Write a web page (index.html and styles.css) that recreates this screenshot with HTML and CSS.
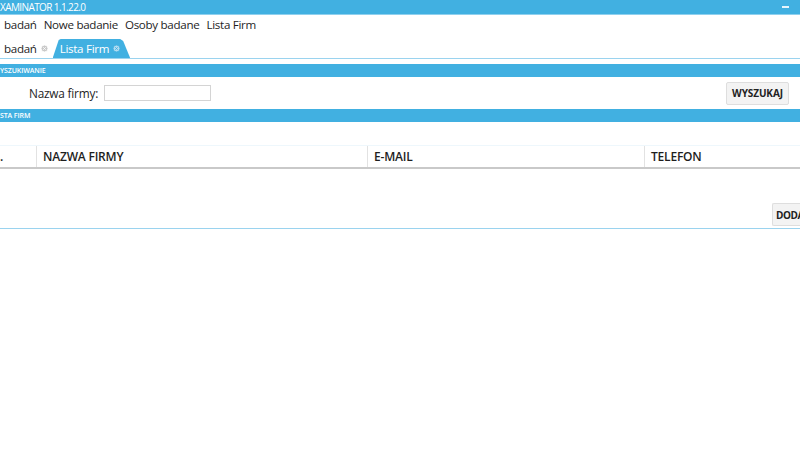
FILE: index.html
```html
<!DOCTYPE html>
<html lang="pl">
<head>
<meta charset="utf-8">
<title>EXAMINATOR 1.1.22.0</title>
<link rel="stylesheet" href="styles.css">
</head>
<body>
<div class="titlebar">
  <span class="title">XAMINATOR 1.1.22.0</span>
  <span class="minimize"></span>
</div>
<nav class="menu">
  <span>badań</span>
  <span>Nowe badanie</span>
  <span>Osoby badane</span>
  <span>Lista Firm</span>
</nav>
<div class="tabs">
  <div class="tab">badań<svg class="close" viewBox="0 0 8 8"><circle cx="4" cy="4" r="4"/><path d="M2.6 2.6 5.4 5.4M5.4 2.6 2.6 5.4"/></svg></div>
  <div class="tab active">Lista Firm<svg class="close" viewBox="0 0 8 8"><circle cx="4" cy="4" r="4"/><path d="M2.6 2.6 5.4 5.4M5.4 2.6 2.6 5.4"/></svg></div>
</div>

<section class="panel">
  <h3 class="head">YSZUKIWANIE</h3>
  <div class="search-row">
    <label>Nazwa firmy:</label>
    <input type="text" class="field">
    <button class="btn">WYSZUKAJ</button>
  </div>
  <h3 class="head">STA FIRM</h3>
  <div class="grid">
    <div class="grid-head">
      <div class="col col-lp">.</div>
      <div class="col col-name">NAZWA FIRMY</div>
      <div class="col col-mail">E-MAIL</div>
      <div class="col col-tel">TELEFON</div>
    </div>
  </div>
  <div class="actions">
    <button class="btn add">DODA</button>
  </div>
</section>
</body>
</html>
```

FILE: styles.css
```css
body {
    margin: 0;
    width: 800px;
    height: 450px;
    overflow: hidden;
    background: #FFF;
    font-family: "Open Sans", "Noto Sans", sans-serif;
    color: #1E1E1E;
}
.titlebar {
    height: 14px;
    background: #41B0E1;
    display: flex;
    align-items: center;
    justify-content: space-between;
    border-bottom: 1px solid #8FD0EE;
}
.title {
    color: #FFF;
    font-size: 10px;
    letter-spacing: -0.6px;
}
.minimize {
    width: 7px;
    height: 2px;
    background: #E6F5FC;
    margin-right: 11px;
}
.menu {
    display: flex;
    gap: 7px;
    height: 17px;
    align-items: center;
    font-size: 11.6px;
    padding: 1px 0 0 4px;
    letter-spacing: -0.3px;
}
.tabs {
    display: flex;
    align-items: flex-end;
    height: 23px;
    margin-top: 2px;
    border-bottom: 1px solid #9AD3EF;
    font-size: 11.6px;
    letter-spacing: -0.3px;
}
.tab {
    display: flex;
    align-items: center;
    height: 19px;
    padding: 0 0 0 4px;
}
.tab.active {
    margin-left: 5px;
    padding: 0 10px 0 7px;
    color: #FFF;
    background: #41B0E1;
    clip-path: polygon(0 100%, 6px 1px, 8px 0, calc(100% - 10px) 0, calc(100% - 7px) 2px, 100% 100%);
}
.close {
    width: 7px;
    height: 7px;
    margin-left: 4px;
    fill: #C9C9C9;
    stroke: #FFF;
    stroke-width: 1.1;
}
.tab.active .close {
    fill: #B3DCF1;
    stroke: #41B0E1;
}
.panel {
    margin-top: 5px;
    border-bottom: 1px solid #9AD3EF;
}
.head {
    margin: 0;
    height: 13px;
    line-height: 13px;
    background: #41B0E1;
    color: #FFF;
    font-size: 7px;
    font-weight: 600;
    letter-spacing: -0.1px;
}
.search-row {
    display: flex;
    align-items: center;
    height: 32px;
    font-size: 11.8px;
}
.search-row label {
    margin-left: 29px;
    width: 75px;
    letter-spacing: -0.2px;
}
.field {
    width: 105px;
    height: 14px;
    padding: 0;
    border: 1px solid #D4D4D4;
    margin: 0;
}
.btn {
    font-family: "Open Sans", "Noto Sans", sans-serif;
    font-size: 10px;
    font-weight: 700;
    color: #222;
    background: #F3F3F3;
    border: 1px solid #DEDEDE;
    border-radius: 2px;
    height: 23px;
    padding: 0 4px;
    letter-spacing: -0.1px;
}
.search-row .btn {
    margin-left: auto;
    margin-right: 11px;
    width: 63px;
}
.grid {
    margin-top: 23px;
}
.grid-head {
    display: flex;
    height: 21px;
    border-top: 1px solid #EEF7FC;
    border-bottom: 2px solid #C9C9C9;
    font-size: 12px;
    font-weight: 600;
}
.col {
    display: flex;
    align-items: center;
    padding-left: 6px;
    border-right: 1px solid #E2E2E2;
    letter-spacing: -0.2px;
}
.col-lp {
    width: 36px;
    padding-left: 0;
}
.col-name {
    width: 324px;
}
.col-mail {
    width: 270px;
}
.col-tel {
    flex: 1;
    border-right: 0;
}
.actions {
    display: flex;
    justify-content: flex-end;
    height: 57px;
    align-items: flex-end;
    padding-bottom: 2px;
}
.btn.add {
    width: 28px;
    padding: 0 0 0 3px;
    text-align: left;
    letter-spacing: -0.4px;
    border-right: 0;
    border-radius: 2px 0 0 2px;
}
```
